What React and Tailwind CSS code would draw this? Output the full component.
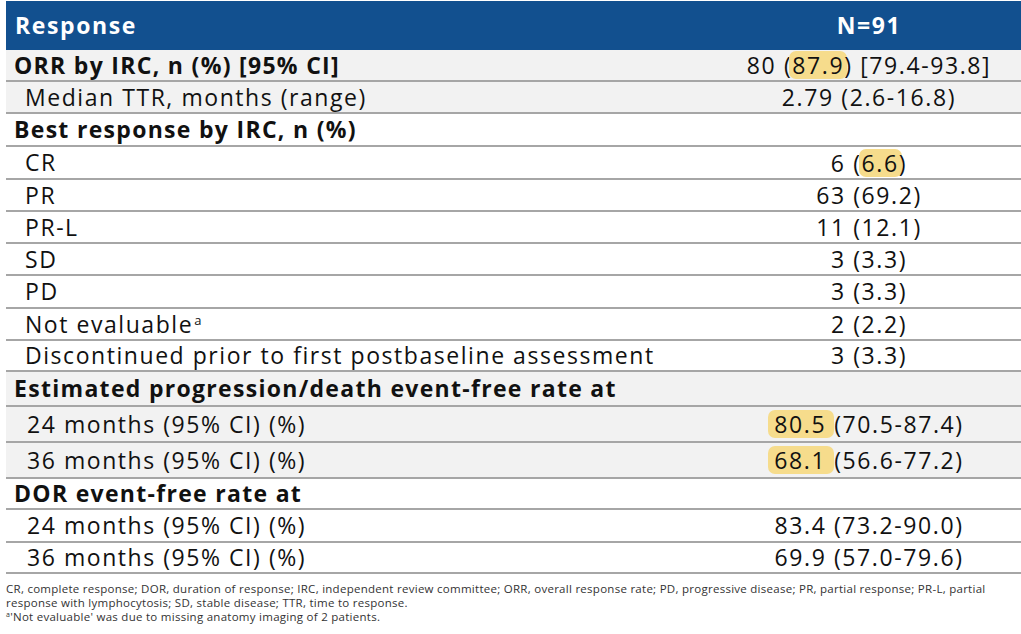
const rows = [
  { label: 'ORR by IRC, n (%) [95% CI]', bold: true, gray: true, h: 'h-[32px]', value: <>80 (<Hl>87.9</Hl>) [79.4-93.8]</> },
  { label: 'Median TTR, months (range)', gray: true, h: 'h-[32px]', value: '2.79 (2.6-16.8)' },
  { label: 'Best response by IRC, n (%)', bold: true, h: 'h-[33px]' },
  { label: 'CR', h: 'h-[33px]', value: <>6 (<Hl>6.6</Hl>)</> },
  { label: 'PR', h: 'h-[32px]', value: '63 (69.2)' },
  { label: 'PR-L', h: 'h-[32px]', value: '11 (12.1)' },
  { label: 'SD', h: 'h-[32px]', value: '3 (3.3)' },
  { label: 'PD', h: 'h-[33px]', value: '3 (3.3)' },
  { label: <>Not evaluable<span className="text-[13px] relative top-[-8px] ml-[1px]">a</span></>, h: 'h-[32px]', value: '2 (2.2)' },
  { label: 'Discontinued prior to first postbaseline assessment', h: 'h-[31px]', value: '3 (3.3)' },
  { label: 'Estimated progression/death event-free rate at', bold: true, gray: true, h: 'h-[35px]' },
  { label: '24 months (95% CI) (%)', gray: true, wide: true, h: 'h-[36px]', value: <><Hl wide>80.5</Hl>(70.5-87.4)</> },
  { label: '36 months (95% CI) (%)', gray: true, wide: true, h: 'h-[36px]', value: <><Hl wide>68.1</Hl>(56.6-77.2)</> },
  { label: 'DOR event-free rate at', bold: true, h: 'h-[31px]' },
  { label: '24 months (95% CI) (%)', wide: true, h: 'h-[33px]', value: '83.4 (73.2-90.0)' },
  { label: '36 months (95% CI) (%)', wide: true, h: 'h-[31px]', value: '69.9 (57.0-79.6)' },
];

function Hl({ children, wide }) {
  return (
    <span className={`inline-block bg-[#f6dc8c] rounded-[7px] leading-[28px] ${wide ? 'pl-[6px] -ml-[6px] pr-[8px]' : 'px-[3px] -mx-[3px]'}`}>
      {children}
    </span>
  );
}

export default function App() {
  return (
    <div className="w-[1021px] h-[634px] bg-white text-[#111] font-['Open_Sans',sans-serif] overflow-hidden">
      <div className="ml-[6px] pt-[1px]">
        {/* header */}
        <div className="flex h-[49px] bg-[#12508f] text-white font-bold text-[23px] tracking-[1.6px] items-center">
          <div className="flex-1 pl-[9px]">Response</div>
          <div className="w-[304px] text-center">N=91</div>
        </div>
        {rows.map((r, i) => (
          <div
            key={i}
            className={`flex items-center border-b-2 border-[#a6a6a6] text-[23px] leading-none ${r.h} ${r.gray ? 'bg-[#f2f2f2]' : 'bg-white'}`}
          >
            <div className={`flex-1 ${r.bold ? 'font-bold pl-[8px] tracking-[1.3px]' : r.wide ? 'pl-[21px] tracking-[1.55px]' : 'pl-[19px] tracking-[1.55px]'}`}>{r.label}</div>
            <div className="w-[304px] text-center tracking-[1.6px]">{r.value}</div>
          </div>
        ))}
        {/* footnotes */}
        <div className="mt-[8px] text-[11.5px] leading-[14px] tracking-[0.27px] text-[#333]">
          <p>CR, complete response; DOR, duration of response; IRC, independent review committee; ORR, overall response rate; PD, progressive disease; PR, partial response; PR-L, partial<br />response with lymphocytosis; SD, stable disease; TTR, time to response.</p>
          <p><span className="text-[7px] relative top-[-4px]">a</span>'Not evaluable' was due to missing anatomy imaging of 2 patients.</p>
        </div>
      </div>
    </div>
  );
}
